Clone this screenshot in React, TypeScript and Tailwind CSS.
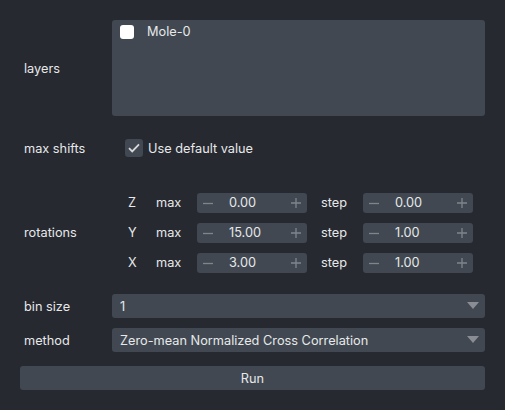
import React from "react";

const font = { fontFamily: "Inter, 'Noto Sans', sans-serif" };

function Spin({ value }: { value: string }) {
  return (
    <div className="flex h-[20px] w-[110px] items-center rounded-[3px] bg-[#414851] pl-[6px] pr-[6px]">
      <svg width="10" height="10" viewBox="0 0 10 10" className="shrink-0">
        <path d="M0 5.5h10" stroke="#80858c" strokeWidth="1.3" />
      </svg>
      <span className="ml-[16px] flex-1 pt-[1px] text-[#e6e8ea]">{value}</span>
      <svg width="10" height="10" viewBox="0 0 10 10" className="shrink-0">
        <path d="M0 5h10M5 0v10" stroke="#80858c" strokeWidth="1.3" />
      </svg>
    </div>
  );
}

function RotRow({ axis, max, step }: { axis: string; max: string; step: string }) {
  return (
    <div className="flex h-[20px] items-center pt-[1px]">
      <span className="w-[44px] pl-[16px]">{axis}</span>
      <span className="w-[41px]">max</span>
      <Spin value={max} />
      <span className="w-[56px] pl-[14px]">step</span>
      <Spin value={step} />
    </div>
  );
}

function Select({ value }: { value: string }) {
  return (
    <div className="flex h-[24px] flex-1 items-center rounded-[3px] bg-[#414851] pl-[8px] pr-[6px]">
      <span className="flex-1 pt-[1px]">{value}</span>
      <svg width="12" height="8" viewBox="0 0 12 8">
        <path d="M0 0h12L6 7z" fill="#8a8e94" />
      </svg>
    </div>
  );
}

export default function App() {
  return (
    <div
      className="h-[410px] w-[505px] bg-[#262930] px-[20px] pt-[20px] text-[12.75px] text-[#e6e8ea]"
      style={font}
    >
      {/* layers */}
      <div className="flex h-[96px] items-center">
        <span className="w-[92px] pl-[4px] pt-[2px]">layers</span>
        <div className="h-full flex-1 rounded-[3px] bg-[#414851] pl-[8px] pt-[4px]">
          <div className="flex h-[15px] items-center">
            <div className="h-[14px] w-[14px] rounded-[3px] bg-white" />
            <span className="ml-[13px]">Mole-0</span>
          </div>
        </div>
      </div>

      {/* max shifts */}
      <div className="mt-[23px] flex h-[18px] items-center">
        <span className="w-[105px] pl-[4px] pt-[1px]">max shifts</span>
        <div className="flex h-[18px] w-[18px] items-center justify-center rounded-[3px] bg-[#414851]">
          <svg width="12" height="10" viewBox="0 0 12 10">
            <path d="M1 5.2l3.2 3.2L11 1.4" stroke="#d6d8db" strokeWidth="1.8" fill="none" />
          </svg>
        </div>
        <span className="ml-[5px] pt-[1px]">Use default value</span>
      </div>

      {/* rotations */}
      <div className="mt-[35px] flex items-center">
        <span className="w-[92px] pl-[4px] pt-[1px]">rotations</span>
        <div className="flex flex-col gap-[10px]">
          <RotRow axis="Z" max="0.00" step="0.00" />
          <RotRow axis="Y" max="15.00" step="1.00" />
          <RotRow axis="X" max="3.00" step="1.00" />
        </div>
      </div>

      {/* bin size */}
      <div className="mt-[22px] flex items-center">
        <span className="w-[92px] pl-[4px] pt-[1px]">bin size</span>
        <Select value="1" />
      </div>

      {/* method */}
      <div className="mt-[10px] flex items-center">
        <span className="w-[92px] pl-[4px] pt-[1px]">method</span>
        <Select value="Zero-mean Normalized Cross Correlation" />
      </div>

      <button className="mt-[14px] flex h-[24px] w-full items-center justify-center rounded-[3px] bg-[#414851] pt-[1px]">
        Run
      </button>
    </div>
  );
}
